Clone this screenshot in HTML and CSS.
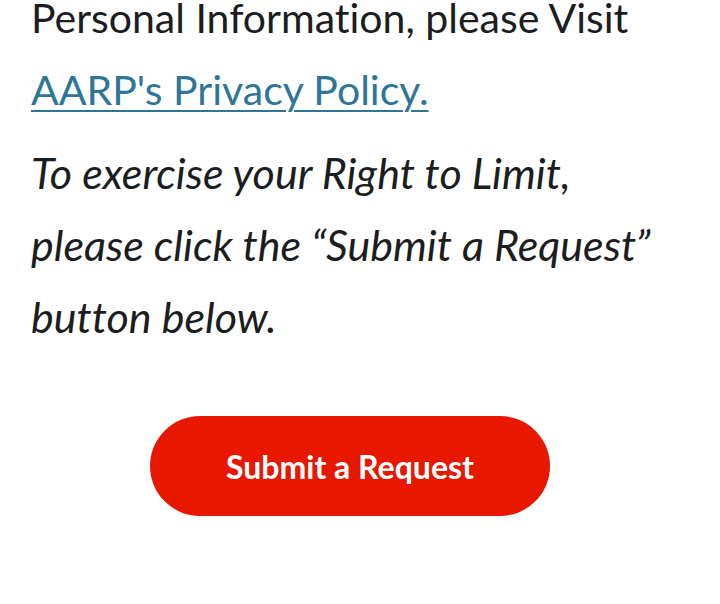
FILE: index.html
```html
<!DOCTYPE html>
<html lang="en">
<head>
  <meta charset="UTF-8">
  <title>Right to Limit</title>
  <link rel="stylesheet" href="styles.css">
</head>
<body>

<div class="content">
  <p class="intro">
    Personal Information, please Visit
    <a href="#" class="policy">AARP's Privacy Policy.</a>
  </p>
  <p class="note">
    To exercise your Right to Limit, please click the &ldquo;Submit a Request&rdquo; button below.
  </p>
</div>
<div class="actions">
  <button class="submit">Submit a Request</button>
</div>

</body>
</html>
```

FILE: styles.css
```css
body{
  margin: 0;
  background: #fff;
  font-family: Lato, "Open Sans", sans-serif;
  color: #1b1d1f;
  font-variant-ligatures: none;
}

.content{
  width: 640px;
  padding: 0 31px;
  margin-top: -18px;
}

.intro,
.note{
  margin: 0;
  font-size: 41px;
  line-height: 72px;
}

.policy{
  color: #2e7698;
  text-decoration: underline;
  text-decoration-thickness: 2px;
  text-underline-offset: 5px;
}

.note{
  margin-top: 11px;
  font-size: 43px;
  font-style: italic;
}

.actions{
  display: flex;
  justify-content: center;
  width: 700px;
  padding: 63px 0 60px;
}

.submit{
  width: 400px;
  height: 100px;
  border: none;
  border-radius: 50px;
  background: #e81700;
  color: #fff;
  font-family: Lato, sans-serif;
  font-weight: bold;
  font-size: 32px;
  font-variant-ligatures: none;
  cursor: pointer;
}
```
